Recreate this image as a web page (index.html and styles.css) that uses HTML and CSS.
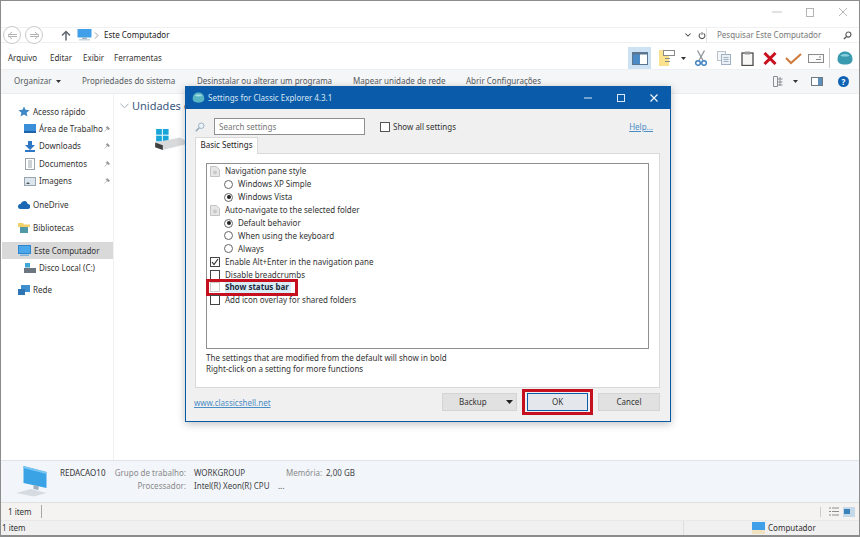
FILE: index.html
```html
<!DOCTYPE html>
<html lang="pt">
<head>
<meta charset="utf-8">
<title>Este Computador</title>
<link rel="stylesheet" href="styles.css">
</head>
<body>
<div class="win">
  <div class="titlebar">
    <svg class="ctl" width="10" height="10" viewBox="0 0 10 10"><path d="M0 5h10" stroke="#c4c4c4"/></svg>
    <svg class="ctl" width="10" height="10" viewBox="0 0 10 10"><rect x="1.500" y="1.500" width="7" height="8" fill="none" stroke="#b4b4b4"/></svg>
    <svg class="ctl" width="10" height="10" viewBox="0 0 10 10"><path d="M1 1l8 8M9 1l-8 8" stroke="#b8b8b8"/></svg>
  </div>
  <div class="addressrow">
    <span class="round"><svg width="11" height="9" viewBox="0 0 11 9"><path d="M5 1L1 4.500l4 3.500M1 3.500h9M1 5.500h9" fill="none" stroke="#b5b5b5"/></svg></span>
    <span class="round r2"><svg width="11" height="9" viewBox="0 0 11 9"><path d="M6 1l4 3.500-4 3.500M10 3.500H1M10 5.500H1" fill="none" stroke="#b5b5b5"/></svg></span>
    <svg class="up" width="10" height="11" viewBox="0 0 10 11"><path d="M5 10.500V2M1 5.500L5 1.500l4 4" fill="none" stroke="#5f6770" stroke-width="1.500"/></svg>
    <svg class="pc" width="15" height="12" viewBox="0 0 15 12"><rect x="0.500" y="0" width="14" height="8.500" fill="#3f9fe8"/><rect x="5" y="8.500" width="5" height="1.500" fill="#9fb4c6"/><rect x="2" y="10" width="11" height="1.500" fill="#c9d4de"/></svg>
    <svg class="crumb" width="5" height="7" viewBox="0 0 5 7"><path d="M1 .5l3 3-3 3" fill="none" stroke="#999"/></svg>
    <span class="addr">Este Computador</span>
    <svg class="drop" width="6" height="4" viewBox="0 0 8 5"><path d="M.5.500L4 4 7.500.500" fill="none" stroke="#555" stroke-width="1.400"/></svg>
    <svg class="refresh" width="8" height="9" viewBox="0 0 10 11"><path d="M5 1.500v3M3 2.800a3.600 3.600 0 1 0 4 0" fill="none" stroke="#555" stroke-width="1.300"/></svg>
    <span class="search"><span>Pesquisar Este Computador</span>
      <svg width="9" height="9" viewBox="0 0 10 10"><circle cx="6" cy="4" r="2.800" fill="none" stroke="#555" stroke-width="1.200"/><path d="M4 6L1 9" stroke="#555" stroke-width="1.500"/></svg></span>
  </div>
  <div class="menurow">
    <nav class="menu"><span>Arquivo</span><span>Editar</span><span>Exibir</span><span>Ferramentas</span></nav>
    <div class="tools">
      <span class="tool-on"><svg width="16" height="13" viewBox="0 0 16 13"><rect x=".5" y=".5" width="15" height="12" fill="#fff" stroke="#5a7690"/><rect x="1" y="2" width="7" height="10" fill="#4b8ac4"/><rect x="1" y="1" width="14" height="1.500" fill="#5a7690"/></svg></span>
      <svg class="t1" width="16" height="16" viewBox="0 0 16 16"><rect x="0" y="0" width="10" height="16" fill="#fbe28e"/><rect x="4.500" y=".5" width="11" height="5" fill="#fff" stroke="#8a8a8a"/><path d="M6 8.500h5M6 11.500h5" stroke="#8a8a8a"/></svg>
      <svg class="t2" width="5" height="3" viewBox="0 0 5 3"><path d="M0 0h5L2.500 3z" fill="#333"/></svg>
      <svg class="t3" width="12" height="16" viewBox="0 0 12 16"><path d="M2.500 .5l5.500 10M9.500 .5L4 10.500" stroke="#8d949b" stroke-width="1.300"/><circle cx="3" cy="13" r="2.300" fill="none" stroke="#3b7fc0" stroke-width="1.400"/><circle cx="9" cy="13" r="2.300" fill="none" stroke="#3b7fc0" stroke-width="1.400"/></svg>
      <svg class="t4" width="14" height="14" viewBox="0 0 14 14"><rect x=".5" y=".5" width="8" height="9" fill="#f4f6f8" stroke="#b9c2ca"/><rect x="4.500" y="3.500" width="9" height="10" fill="#eaf0f6" stroke="#9fb0c0"/><path d="M6.500 6.500h5M6.500 8.500h5M6.500 10.500h5" stroke="#9fb0c0"/></svg>
      <svg class="t5" width="13" height="15" viewBox="0 0 13 15"><rect x="1" y="2" width="11" height="12.500" fill="#f7f7f5" stroke="#4c4c4c" stroke-width="1.300"/><rect x="4" y=".5" width="5" height="3" fill="#9a9a9a"/></svg>
      <svg class="t6" width="14" height="13" viewBox="0 0 14 13"><path d="M1.500 1l11 11M12.500 1l-11 11" stroke="#c8101f" stroke-width="3"/></svg>
      <svg class="t7" width="17" height="13" viewBox="0 0 17 13"><path d="M1 6l5 5L16 2" fill="none" stroke="#cf7a3a" stroke-width="2"/></svg>
      <svg class="t8" width="16" height="9" viewBox="0 0 16 9"><rect x=".5" y=".5" width="15" height="8" fill="#fbfbfb" stroke="#8a8a8a"/><path d="M8 5.500h5M11 3h2" stroke="#8a8a8a"/></svg>
      <i class="tsep"></i>
      <svg class="t9" width="18" height="15" viewBox="0 0 18 16"><path d="M1 9C1 3 5 .5 9 .5S17 3 17 9c0 2-1 3-2 4-2 2-10 2-12 0-1-1-2-2-2-4z" fill="#3a9bb0"/><path d="M4 5c2-2.500 8-2.500 10 0-2 1.200-8 1.200-10 0z" fill="#8ad0dc"/></svg>
    </div>
  </div>
  <div class="cmdbar">
    <span class="cmd c0">Organizar<svg width="5" height="3" viewBox="0 0 5 3"><path d="M0 0h5L2.500 3z" fill="#333"/></svg></span>
    <span class="cmd c1">Propriedades do sistema</span>
    <span class="cmd c2">Desinstalar ou alterar um programa</span>
    <span class="cmd c3">Mapear unidade de rede</span>
    <span class="cmd c4">Abrir Configurações</span>
    <div class="cmdright">
      <svg width="10" height="11" viewBox="0 0 10 11"><path d="M.5.500h4v10h-4zM4.500 3h5M4.500 6h5M4.500 9h5M7 1v9" fill="none" stroke="#8a8f94"/></svg>
      <svg class="cr2" width="5" height="3" viewBox="0 0 5 3"><path d="M0 0h5L2.500 3z" fill="#333"/></svg>
      <svg class="cr3" width="12" height="9" viewBox="0 0 12 9"><rect x=".5" y=".5" width="11" height="8" fill="#fff" stroke="#6d7a86"/><rect x="7" y="1" width="4" height="7" fill="#5d8fbb"/></svg>
      <span class="help">?</span>
    </div>
  </div>
  <div class="main">
    <aside class="side">
      <div class="it top"><svg width="12" height="11" viewBox="0 0 12 11"><path d="M6 .5l1.600 3.300 3.900.4-2.900 2.500.9 3.800L6 8.500 2.500 10.500l.9-3.800L.5 4.200l3.900-.4z" fill="#3d88c5"/></svg>Acesso rápido</div>
      <div class="it sub"><svg width="12" height="9" viewBox="0 0 12 9"><rect width="12" height="9" fill="#3b8fd8"/><rect y="7" width="12" height="2" fill="#1e63a8"/></svg><span class="lbl">Área de Trabalho</span><svg class="pin" width="6" height="6" viewBox="0 0 6 6"><path d="M.5 5.500L3 3M2 1.500L4.500 4 5.500 2.500 3.500.5z" fill="#999" stroke="#999" stroke-width=".6"/></svg></div>
      <div class="it sub"><svg width="12" height="11" viewBox="0 0 12 11"><path d="M4 0h4v4h3L6 9 1 4h3z" fill="#2f77c4"/><rect x="1" y="9" width="10" height="2" fill="#2f77c4"/></svg><span class="lbl">Downloads</span><svg class="pin" width="6" height="6" viewBox="0 0 6 6"><path d="M.5 5.500L3 3M2 1.500L4.500 4 5.500 2.500 3.500.5z" fill="#999" stroke="#999" stroke-width=".6"/></svg></div>
      <div class="it sub"><svg width="12" height="12" viewBox="0 0 12 12"><rect x="1.500" y=".5" width="9" height="11" fill="#fff" stroke="#9aa4ae"/><path d="M4 3h4M4 5h4M4 7h4M4 9h4" stroke="#9aa4ae"/></svg><span class="lbl">Documentos</span><svg class="pin" width="6" height="6" viewBox="0 0 6 6"><path d="M.5 5.500L3 3M2 1.500L4.500 4 5.500 2.500 3.500.5z" fill="#999" stroke="#999" stroke-width=".6"/></svg></div>
      <div class="it sub"><svg width="12" height="9" viewBox="0 0 12 9"><rect x=".5" y=".5" width="11" height="8" fill="#dbe5ee" stroke="#9aa4ae"/><path d="M2 7l2-2 2 2z" fill="#555"/></svg><span class="lbl">Imagens</span><svg class="pin" width="6" height="6" viewBox="0 0 6 6"><path d="M.5 5.500L3 3M2 1.500L4.500 4 5.500 2.500 3.500.5z" fill="#999" stroke="#999" stroke-width=".6"/></svg></div>
      <div class="it top s2"><svg width="12" height="8" viewBox="0 0 12 8"><path d="M2.500 8a2.500 2.500 0 0 1 0-5C3.500 1 5 0 6.500 0 8.500 0 9.500 1.500 9.700 3a2.500 2.500 0 0 1 0 5z" fill="#1d68b5"/></svg>OneDrive</div>
      <div class="it top s3"><svg width="12" height="11" viewBox="0 0 12 11"><path d="M0 1h5l1 1.500h6V5H0z" fill="#f2d06b"/><rect x="2" y="5" width="8" height="6" fill="#4f98a8"/></svg>Bibliotecas</div>
      <div class="it top sel"><svg width="13" height="11" viewBox="0 0 13 11"><rect x=".5" y=".5" width="12" height="8" fill="#4aa8ea" stroke="#2e86cc"/><rect x="2" y="9.500" width="9" height="1.500" fill="#7fb4de"/></svg>Este Computador</div>
      <div class="it sub"><svg width="12" height="10" viewBox="0 0 12 10"><rect x="0" y="5" width="12" height="5" fill="#6b7680"/><rect x="1" y="0" width="5" height="4.500" fill="#3fa6d8"/></svg><span>Disco Local (C:)</span></div>
      <div class="it top s4"><svg width="12" height="11" viewBox="0 0 12 11"><rect x="3" width="9" height="7" fill="#3e8fd0"/><rect y="4" width="7" height="6" fill="#2d74b5"/></svg>Rede</div>
    </aside>
    <section class="content">
      <div class="grp"><svg width="9" height="6" viewBox="0 0 10 6"><path d="M.5.500L5 5 9.500.500" fill="none" stroke="#9aa3ad"/></svg><span class="grpname">Unidades de disco rígido</span></div>
      <svg class="drive" width="31" height="23" viewBox="0 0 32 24"><rect x="1" y="1" width="6" height="6" fill="#19a5d8"/><rect x="8" y="1" width="6" height="6" fill="#19a5d8"/><rect x="1" y="8" width="6" height="6" fill="#19a5d8"/><rect x="8" y="8" width="6" height="6" fill="#19a5d8"/><path d="M0 15l26-5 6 3v4L8 23l-8-3z" fill="#d7d9db"/><path d="M0 15l8 3v5l-8-3z" fill="#3f3f3f"/></svg>
    </section>

    <div class="dlg">
      <div class="dlgtitle">
        <svg width="13" height="12" viewBox="0 0 18 16"><path d="M1 9C1 3 5 .5 9 .5S17 3 17 9c0 2-1 3-2 4-2 2-10 2-12 0-1-1-2-2-2-4z" fill="#58b5c4"/><path d="M4 5c2-2.500 8-2.500 10 0-2 1.200-8 1.200-10 0z" fill="#a9e0e6"/></svg>
        <span class="dt">Settings for Classic Explorer 4.3.1</span>
        <svg class="dc" width="10" height="10" viewBox="0 0 10 10"><path d="M1 5h8" stroke="#d8e8f6"/></svg>
        <svg class="dc d2" width="10" height="10" viewBox="0 0 10 10"><rect x="1.500" y="1.500" width="7" height="7" fill="none" stroke="#d8e8f6"/></svg>
        <svg class="dc d3" width="10" height="10" viewBox="0 0 10 10"><path d="M1.500 1.500l7 7M8.500 1.500l-7 7" stroke="#eef5fb" stroke-width="1.200"/></svg>
      </div>
      <div class="dlgbody">
        <div class="searchrow">
          <svg width="10" height="10" viewBox="0 0 12 12"><circle cx="7.500" cy="4.500" r="3.300" fill="#eaf2f8" stroke="#9fb2c2" stroke-width="1.200"/><path d="M5 7L1 11" stroke="#8fa6b8" stroke-width="1.800"/></svg>
          <span class="sbox">Search settings</span>
          <i class="cb"></i><span class="showall">Show all settings</span>
          <a class="helplink">Help...</a>
        </div>
        <div class="tabrow"><span class="tab">Basic Settings</span></div>
        <div class="panel">
          <div class="list">
            <div class="row"><svg class="doc" width="10" height="11" viewBox="0 0 10 11"><path d="M.5.500h6l3 3v7h-9z" fill="#e6e6e6" stroke="#c4c4c4"/><circle cx="5" cy="6.500" r="2" fill="#c8c8c8"/></svg>Navigation pane style</div>
            <div class="row in"><i class="rd"></i>Windows XP Simple</div>
            <div class="row in"><i class="rd on"></i>Windows Vista</div>
            <div class="row"><svg class="doc" width="10" height="11" viewBox="0 0 10 11"><path d="M.5.500h6l3 3v7h-9z" fill="#e6e6e6" stroke="#c4c4c4"/><circle cx="5" cy="6.500" r="2" fill="#c8c8c8"/></svg>Auto-navigate to the selected folder</div>
            <div class="row in"><i class="rd on"></i>Default behavior</div>
            <div class="row in"><i class="rd"></i>When using the keyboard</div>
            <div class="row in"><i class="rd"></i>Always</div>
            <div class="row"><i class="lb chk"><svg width="8" height="8" viewBox="0 0 8 8"><path d="M1 4l2 2.500L7 1" fill="none" stroke="#333" stroke-width="1.200"/></svg></i>Enable Alt+Enter in the navigation pane</div>
            <div class="row"><i class="lb"></i>Disable breadcrumbs</div>
            <div class="row marked"><i class="lb off"></i><b class="hl">Show status bar</b><span class="redbox"></span></div>
            <div class="row"><i class="lb"></i>Add icon overlay for shared folders</div>
          </div>
          <p class="note">The settings that are modified from the default will show in bold<br>Right-click on a setting for more functions</p>
        </div>
        <div class="dlgfoot">
          <a class="site">www.classicshell.net</a>
          <span class="btn backup"><span>Backup</span><svg width="7" height="4" viewBox="0 0 7 4"><path d="M0 0h7L3.500 4z" fill="#222"/></svg></span>
          <span class="btn ok">OK<span class="redbox2"></span></span>
          <span class="btn cancel">Cancel</span>
        </div>
      </div>
    </div>
  </div>
  <div class="details">
    <svg class="bigpc" width="33" height="31" viewBox="0 0 32 31"><path d="M8 0l23 6v16L8 17z" fill="#39a3e6"/><path d="M8 0l23 6v2L8 2z" fill="#7cc6f2"/><path d="M18 19l5 1v4l-5-1z" fill="#9fb0bc"/><path d="M1 27l14-4 16 4-13 3.500z" fill="#d5dbe0"/></svg>
    <div class="pcname">REDACAO10</div>
    <dl class="props">
      <dt>Grupo de trabalho:</dt><dd>WORKGROUP</dd>
      <dt class="m">Memória:</dt><dd class="mv">2,00 GB</dd>
      <dt>Processador:</dt><dd class="wide">Intel(R) Xeon(R) CPU &nbsp;&nbsp;&nbsp;...</dd>
    </dl>
  </div>
  <div class="status1">
    <span class="st">1 item</span>
    <div class="viewbtns">
      <svg width="10" height="9" viewBox="0 0 10 9"><path d="M0 1h2M3 1h7M0 4.500h2M3 4.500h7M0 8h2M3 8h7" stroke="#8d8d8d"/></svg>
      <svg width="12" height="10" viewBox="0 0 12 10"><rect width="12" height="10" fill="#c5d9e8"/><rect x="1" y="2" width="6" height="5" fill="#3a82b8"/></svg>
    </div>
  </div>
  <div class="status2">
    <span class="s2a">1 item</span>
    <i class="sp sp1"></i>
    <svg class="s2pc" width="13" height="12" viewBox="0 0 13 12"><rect width="13" height="8" fill="#3f9fe8"/><rect y="8" width="13" height="4" fill="#f1e3c0"/></svg>
    <span>Computador</span>
  </div>
</div>
</body>
</html>
```
FILE: styles.css
```css
* { box-sizing: border-box; }
html, body { margin: 0; padding: 0; }
body { width: 860px; height: 537px; overflow: hidden; background: #fff; font: 8px/12px "Noto Sans", "Open Sans", sans-serif; color: #333; }
svg { display: block; flex: none; }
i { display: block; flex: none; }

.win { width: 860px; height: 537px; display: flex; flex-direction: column; border: solid #8c8c8c; border-width: 1px 1px 2px 1px; position: relative; }

.titlebar { height: 26px; display: flex; justify-content: flex-end; align-items: center; padding: 0 11px 4px 0; gap: 23px; }

.addressrow { height: 16px; display: flex; align-items: center; padding-left: 2px; border-top: 1px solid #f0f0f0; border-bottom: 1px solid #f0f0f0; }
.round { width: 18px; height: 18px; border: 1px solid #c9c9c9; border-radius: 50%; display: flex; align-items: center; justify-content: center; flex: none; background: #fff; }
.r2 { margin-left: 4px; }
.up { margin-left: 18px; }
.pc { margin-left: 6px; }
.crumb { margin-left: 2px; }
.addr { margin-left: 5px; width: 581px; color: #222; flex: none; }
.refresh { margin-left: 7px; }
.search { width: 149px; height: 14px; margin-left: 0; padding: 0 3px 0 10px; display: flex; align-items: center; justify-content: space-between; color: #777; border-left: 1px solid #e2e2e2; flex: none; }

.menurow { height: 26px; display: flex; align-items: center; justify-content: space-between; padding-top: 4px; }
.menu { display: flex; padding-left: 7px; color: #333; }
.menu span:nth-child(1) { width: 42px; }
.menu span:nth-child(2) { width: 33px; }
.menu span:nth-child(3) { width: 31px; }
.tools { display: flex; align-items: center; padding-right: 5px; }
.tool-on { width: 23px; height: 22px; background: #cde2f3; display: flex; align-items: center; justify-content: center; }
.t1 { margin-left: 8px; }
.t2 { margin-left: 6px; }
.t3 { margin-left: 9px; }
.t4 { margin-left: 10px; }
.t5 { margin-left: 10px; }
.t6 { margin-left: 9px; }
.t7 { margin-left: 8px; }
.t8 { margin-left: 6px; }
.tsep { width: 1px; height: 20px; margin-left: 5px; background: #c8c8c8; }
.t9 { margin-left: 6px; }

.cmdbar { height: 24px; background: #f5f6f7; display: flex; align-items: center; padding-bottom: 1px; border-top: 1px solid #eef0f2; }
.cmd { color: #555a60; white-space: nowrap; }
.c0 { margin-left: 13px; display: flex; align-items: center; gap: 5px; width: 68px; }
.c1 { width: 115px; }
.c2 { width: 156px; }
.c3 { width: 113px; }
.cmdright { margin-left: auto; display: flex; align-items: center; padding-right: 10px; }
.cr2 { margin-left: 10px; }
.cr3 { margin-left: 13px; }
.help { margin-left: 15px; width: 11px; height: 11px; border-radius: 50%; background: #0f63b5; color: #fff; font-weight: 700; line-height: 11px; text-align: center; }

.main { flex: 1; display: flex; position: relative; border-top: 1px solid #ecedef; min-height: 0; }
.side { width: 113px; padding-top: 9px; border-right: 1px solid #f1f1f1; flex: none; }
.it { display: flex; align-items: center; height: 17px; color: #333; white-space: nowrap; overflow: hidden; }
.it svg { margin-right: 3px; }
.top { padding-left: 17px; }
.sub { padding-left: 23px; height: 17.500px; }
.lbl { width: 65px; overflow: hidden; flex: none; }
.s2 { margin-top: 6px; }
.s3 { margin-top: 6px; }
.sel { margin-top: 6px; margin-left: 1px; padding-left: 16px; background: #d9d9d9; }
.s4 { margin-top: 5px; }

.content { flex: 1; padding: 5px 0 0 6px; }
.grp { display: flex; align-items: center; gap: 3px; font-size: 11px; line-height: 14px; color: #3d5a80; white-space: nowrap; }
.grpname { width: 54px; overflow: hidden; }
.drive { margin: 15px 0 0 35px; }

.dlg { position: absolute; left: 184px; top: -8px; width: 486px; height: 336px; background: #f0f0f0; border: 1px solid #0a5aa6; box-shadow: 0 2px 8px rgba(0,0,0,.25); display: flex; flex-direction: column; }
.dlgtitle { height: 22px; background: #0a5caa; display: flex; align-items: center; padding-left: 6px; color: #d8e6f3; flex: none; }
.dt { margin-left: 3px; }
.dc { margin-left: auto; margin-right: 23px; }
.dc.d2 { margin-left: 0; margin-right: 23px; }
.dc.d3 { margin-left: 0; margin-right: 11px; }
.dlgbody { flex: 1; display: flex; flex-direction: column; padding: 0 10px 0 9px; min-height: 0; }
.searchrow { height: 27px; padding-top: 8px; display: flex; align-items: center; flex: none; }
.sbox { width: 151px; height: 17px; margin-left: 9px; background: #fff; border: 1px solid #8f8f8f; padding-left: 4px; line-height: 15px; color: #777; }
.cb { width: 10px; height: 10px; margin-left: 15px; border: 1px solid #555; background: #fff; }
.showall { margin-left: 3px; color: #333; }
.helplink { margin-left: auto; margin-right: 7px; color: #4a8cc4; text-decoration: underline; }
.tabrow { height: 16px; margin-top: 1px; display: flex; flex: none; }
.tab { width: 63px; height: 17px; background: #fff; border: 1px solid #d9d9d9; border-bottom: 0; text-align: center; line-height: 13px; position: relative; z-index: 1; color: #222; }
.panel { height: 235px; background: #fff; border: 1px solid #d9d9d9; padding: 9px 10px 0; flex: none; }
.list { height: 186px; border: 1px solid #8f8f8f; padding: 1px 0 0 3px; }
.row { height: 12.900px; display: flex; align-items: center; position: relative; color: #333; white-space: nowrap; }
.in { padding-left: 14px; }
.doc { margin-right: 5px; }
.rd { width: 9px; height: 9px; margin-right: 5px; border: 1px solid #666; border-radius: 50%; background: #fff; position: relative; }
.rd.on::after { content: ""; position: absolute; left: 1.500px; top: 1.500px; width: 4px; height: 4px; border-radius: 50%; background: #222; }
.lb { width: 10px; height: 10px; margin-right: 5px; border: 1px solid #444; background: #fff; display: flex; align-items: center; justify-content: center; }
.lb.off { border-color: #ccc; }
.hl { background: #d9ecf8; color: #1c2a3a; padding-right: 2px; }
.redbox { position: absolute; left: -4px; top: -2px; width: 92px; height: 17px; border: 3px solid #c5101f; }
.note { margin: 3px 0 0; line-height: 11px; color: #333; }
.dlgfoot { flex: 1; display: flex; align-items: flex-start; padding-top: 5px; }
.site { color: #4a8cc4; text-decoration: underline; margin-top: 4px; margin-left: -1px; width: 248px; }
.btn { height: 18px; background: #e1e1e1; border: 1px solid #d4d4d4; display: flex; align-items: center; justify-content: center; color: #333; position: relative; flex: none; }
.backup { width: 75px; justify-content: space-between; padding: 0 3px 0 16px; }
.ok { width: 61px; margin-left: 10px; border: 1px solid #0a5caa; background: #e4e8ec; }
.cancel { width: 62px; margin-left: 10px; }
.redbox2 { position: absolute; left: -6px; top: -5px; width: 71px; height: 26px; border: 3px solid #c5101f; }

.details { height: 43px; background: #f2f6fb; border-top: 1px solid #dfe3e8; border-bottom: 1px solid #e0e0e0; display: flex; padding: 5px 0 0 14px; flex: none; }
.pcname { margin-left: 12px; width: 54px; padding-top: 1px; color: #333; }
.props { margin: 0; padding-top: 1px; display: grid; grid-template-columns: 72px 84px 32px 60px; column-gap: 8px; row-gap: 1px; align-content: start; }
.props dt { text-align: right; color: #8a8a8a; white-space: nowrap; }
.props dd { margin: 0; color: #444; white-space: nowrap; }
.props .m { text-align: left; }
.props .wide { grid-column: 2 / 5; }

.status1 { height: 17px; background: #f4f3f1; display: flex; align-items: center; justify-content: space-between; padding: 0 4px 0 7px; flex: none; }
.st { padding-right: 9px; border-right: 1px solid #a8a8a8; line-height: 13px; }
.viewbtns { display: flex; align-items: center; gap: 4px; padding-left: 8px; border-left: 1px solid #ccc; }
.status2 { height: 15px; background: #f0f0f0; display: flex; align-items: center; padding-left: 1px; border-top: 1px solid #e8e8e8; flex: none; }
.s2a { width: 681px; }
.sp { width: 1px; height: 14px; background: #ddd; }
.sp1 { margin-right: 68px; }
.s2pc { margin-right: 3px; }
```
